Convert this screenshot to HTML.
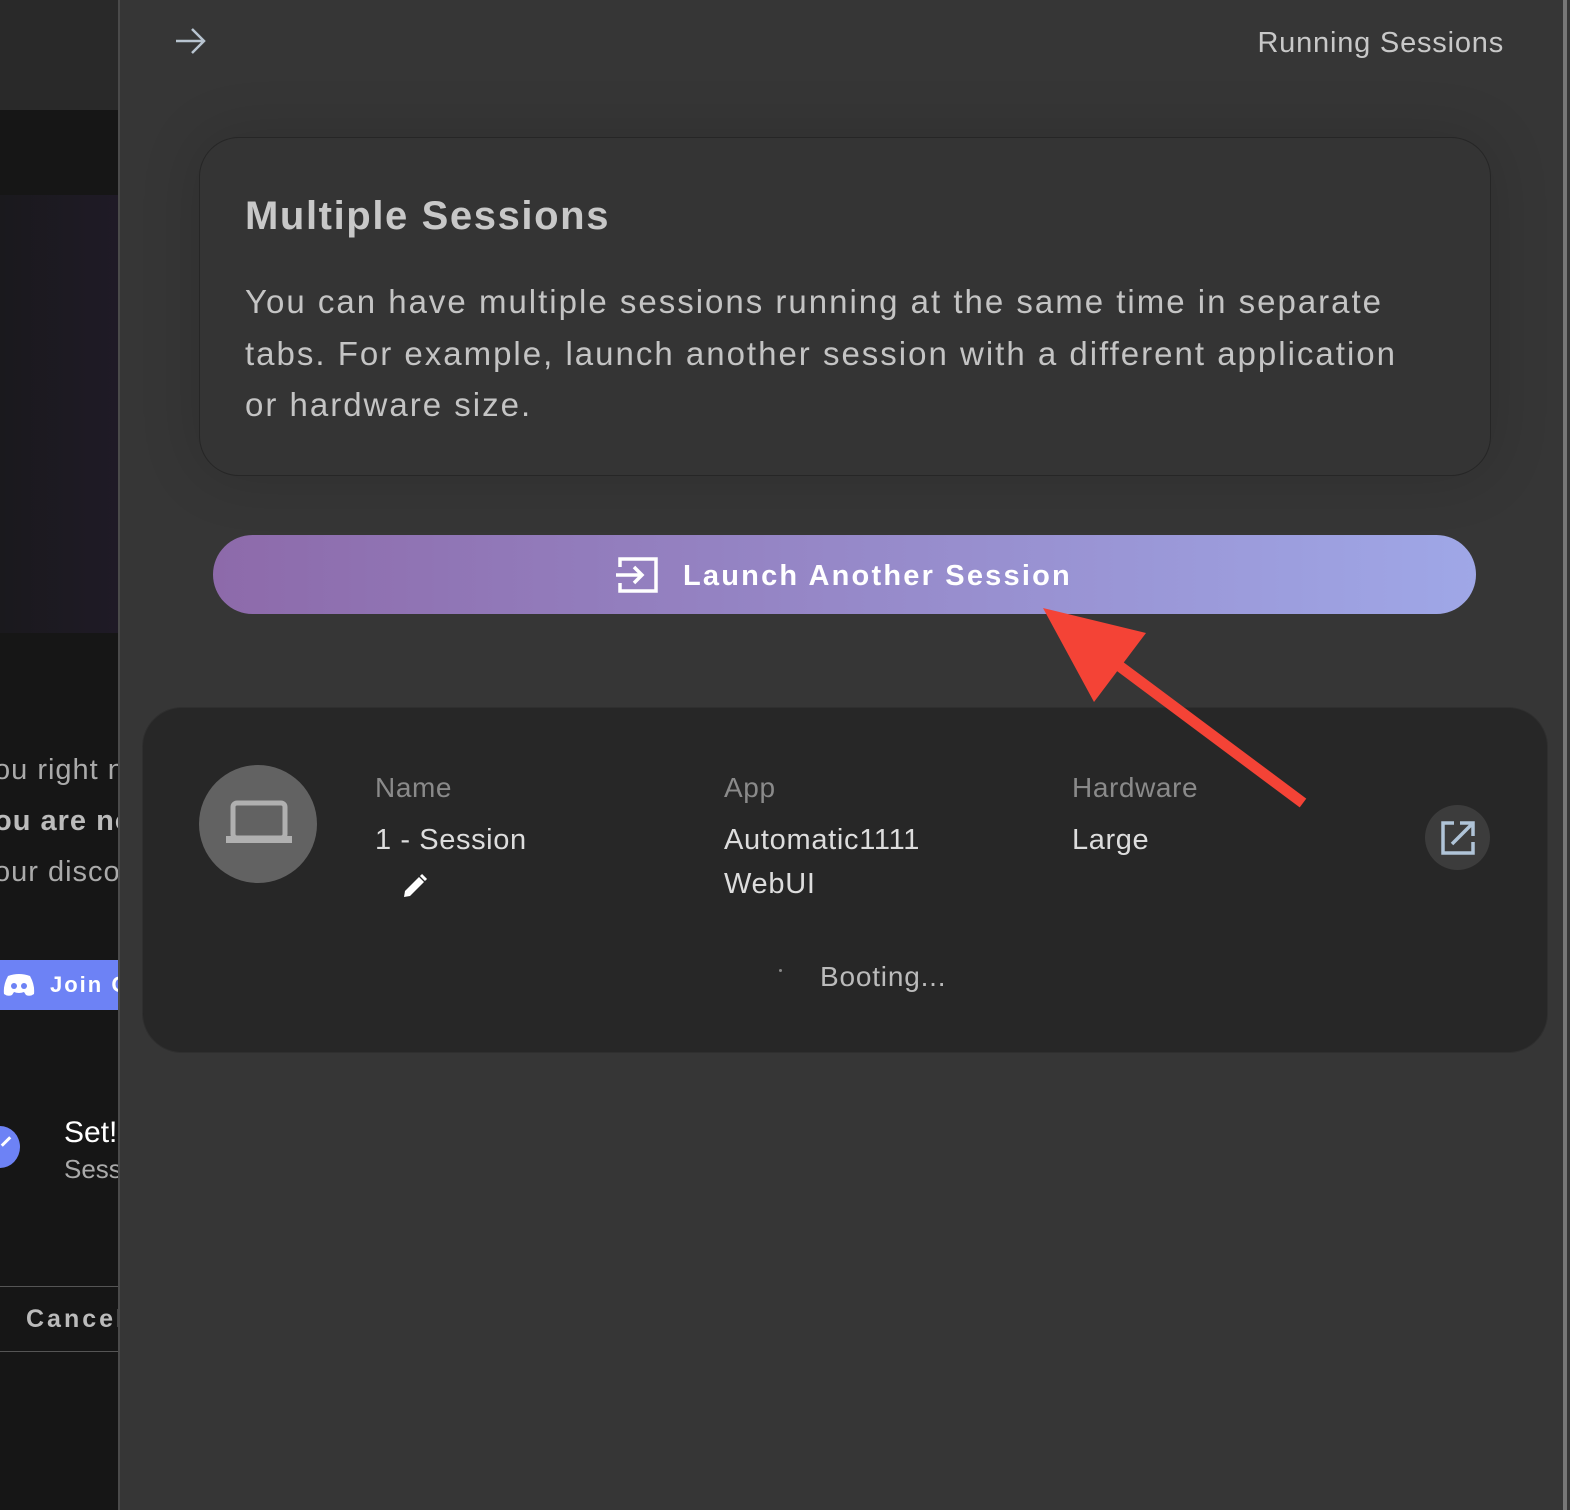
<!DOCTYPE html>
<html><head><meta charset="utf-8"><style>
*{margin:0;padding:0;box-sizing:border-box}
body{width:1570px;height:1510px;background:#363636;font-family:"Liberation Sans",sans-serif;position:relative;overflow:hidden}
.abs{position:absolute}
</style></head><body>
<div class="abs" style="left:0;top:0;width:118px;height:1510px;background:#161616"></div>
<div class="abs" style="left:0;top:0;width:118px;height:110px;background:#292929"></div>
<div class="abs" style="left:0;top:195px;width:118px;height:438px;background:linear-gradient(90deg,#1a191d,#1f1a26)"></div>
<div class="abs" style="left:118px;top:0;width:2px;height:1510px;background:#4a4a4a"></div>
<div class="abs" style="left:1563px;top:0;width:4px;height:1510px;background:#777"></div>
<div class="abs" style="left:0;top:745px;width:118px;font-size:29px;color:#aaa;line-height:51px;white-space:nowrap;overflow:hidden;letter-spacing:1px">
<div style="margin-left:-6px">ou right now</div><div style="margin-left:-6px;font-weight:bold;color:#bbb">ou are not</div><div style="margin-left:-6px">our discord</div></div>
<div class="abs" style="left:0;top:960px;width:118px;height:50px;background:#6d82f5;overflow:hidden;color:#fff;font-weight:bold;font-size:22px;line-height:50px;letter-spacing:2px;white-space:nowrap">
<svg class="abs" style="left:2px;top:13px" width="34" height="24" viewBox="0 0 34 24"><path d="M6 3 Q17 -1 28 3 Q33 12 32 21 Q28 24 24 22 L22 19 Q17 21 12 19 L10 22 Q6 24 2 21 Q1 12 6 3Z" fill="#fff"/><circle cx="12" cy="13" r="3" fill="#6d82f5"/><circle cx="22" cy="13" r="3" fill="#6d82f5"/></svg>
<span style="position:absolute;left:50px">Join Our</span></div>
<div class="abs" style="left:-20px;top:1126px;width:40px;height:42px;border-radius:50%;background:#6d82f5"></div>
<div class="abs" style="left:0;top:1140px;width:12px;height:3px;background:#fff;transform:rotate(-45deg)"></div>
<div class="abs" style="left:64px;top:1116px;font-size:30px;color:#fff;width:54px;overflow:hidden;white-space:nowrap">Set!</div>
<div class="abs" style="left:64px;top:1154px;font-size:26px;color:#aaa;width:54px;overflow:hidden;white-space:nowrap">Session</div>
<div class="abs" style="left:0;top:1286px;width:118px;height:66px;border-top:1px solid #555;border-bottom:1px solid #555;font-size:25px;font-weight:bold;color:#bbb;letter-spacing:3px;line-height:64px;padding-left:26px;white-space:nowrap;overflow:hidden">Cancel</div>

<svg class="abs" style="left:174px;top:26px" width="34" height="30" viewBox="0 0 34 30"><path d="M2 15H30M18 3L30 15L18 27" stroke="#b8c4d0" stroke-width="2.5" fill="none"/></svg>
<div class="abs" style="right:66px;top:27px;font-size:29px;color:#c8c8c8;letter-spacing:0.8px">Running Sessions</div>

<div class="abs" style="left:199px;top:137px;width:1292px;height:339px;border-radius:40px;background:#343434;border:1px solid #262626;box-shadow:0 0 60px rgba(0,0,0,.15)"></div>
<div class="abs" style="left:245px;top:194px;font-size:40px;font-weight:bold;color:#c8c8c8;letter-spacing:1.6px">Multiple Sessions</div>
<div class="abs" style="left:245px;top:276px;width:1240px;font-size:33px;line-height:51.5px;color:#c4c4c4;letter-spacing:2px;white-space:nowrap">You can have multiple sessions running at the same time in separate<br>tabs. For example, launch another session with a different application<br>or hardware size.</div>

<div class="abs" style="left:213px;top:535px;width:1263px;height:79px;border-radius:40px;background:linear-gradient(90deg,#8d6aaa,#9fa7e7)"></div>
<svg class="abs" style="left:616px;top:555px" width="44" height="40" viewBox="0 0 44 40"><path d="M4 12V4H40V36H4V28" stroke="#fff" stroke-width="3.5" fill="none"/><path d="M0 20H26M18 12L26 20L18 28" stroke="#fff" stroke-width="3.5" fill="none"/></svg>
<div class="abs" style="left:683px;top:560px;font-size:29px;font-weight:bold;color:#fff;letter-spacing:2.2px">Launch Another Session</div>

<div class="abs" style="left:142px;top:707px;width:1406px;height:346px;border-radius:40px;background:#272727;border:1px solid #2f2f2f"></div>
<div class="abs" style="left:199px;top:765px;width:118px;height:118px;border-radius:50%;background:#626262"></div>
<svg class="abs" style="left:226px;top:800px" width="66" height="46" viewBox="0 0 66 46"><rect x="7" y="3" width="52" height="35" rx="4" stroke="#b0b0b0" stroke-width="5" fill="none"/><rect x="0" y="36" width="66" height="7" fill="#b0b0b0"/></svg>
<div class="abs" style="left:375px;top:772px;font-size:28px;color:#8a8a8a;letter-spacing:0.6px">Name</div>
<div class="abs" style="left:375px;top:824px;font-size:29px;color:#ddd;letter-spacing:0.6px">1 - Session</div>
<svg class="abs" style="left:402px;top:873px" width="26" height="26" viewBox="0 0 26 26"><path d="M2 24L3 18L17 4L22 9L8 23Z" fill="#fff"/><path d="M19 2L24 7" stroke="#fff" stroke-width="3"/></svg>
<div class="abs" style="left:724px;top:772px;font-size:28px;color:#8a8a8a;letter-spacing:0.6px">App</div>
<div class="abs" style="left:724px;top:818px;font-size:29px;color:#ddd;line-height:44px;letter-spacing:0.7px">Automatic1111<br>WebUI</div>
<div class="abs" style="left:1072px;top:772px;font-size:28px;color:#8a8a8a;letter-spacing:0.6px">Hardware</div>
<div class="abs" style="left:1072px;top:824px;font-size:29px;color:#ddd;letter-spacing:0.6px">Large</div>
<div class="abs" style="left:1425px;top:805px;width:65px;height:65px;border-radius:50%;background:#3c3c3c"></div>
<svg class="abs" style="left:1440px;top:820px" width="36" height="36" viewBox="0 0 36 36"><path d="M14 3H3V33H33V22" stroke="#b0c4d8" stroke-width="3.5" fill="none"/><path d="M20 3H33V16M33 3L12 24" stroke="#b0c4d8" stroke-width="3.5" fill="none"/></svg>
<div class="abs" style="left:779px;top:969px;width:3px;height:3px;background:#888;border-radius:50%"></div>
<div class="abs" style="left:820px;top:961px;font-size:28px;color:#bbb;letter-spacing:0.8px">Booting...</div>

<svg class="abs" style="left:0;top:0" width="1570" height="1510"><path d="M1303 803L1118 665" stroke="#f44336" stroke-width="11"/><polygon points="1043,608 1146,633 1094,702" fill="#f44336"/></svg>
</body></html>
